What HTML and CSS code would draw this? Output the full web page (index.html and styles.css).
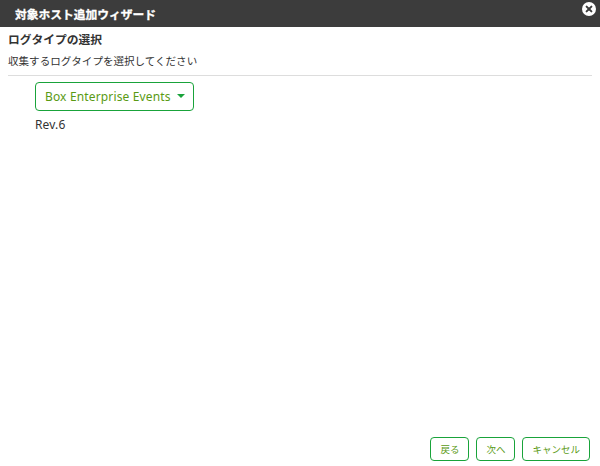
FILE: index.html
```html
<!DOCTYPE html>
<html lang="ja">
<head>
  <meta charset="UTF-8">
  <title>対象ホスト追加ウィザード</title>
  <link rel="stylesheet" href="styles.css">
</head>
<body>
<div class="dialog">
  <div class="titlebar">
    <span class="title">対象ホスト追加ウィザード</span>
    <button class="close-btn" title="閉じる">
      <svg viewBox="0 0 14 14" width="14" height="14">
        <circle cx="7" cy="7" r="7" fill="#fff"/>
        <path d="M4.6 4.6l4.8 4.8M9.4 4.6l-4.8 4.8" stroke="#3c3c3c" stroke-width="2" stroke-linecap="round"/>
      </svg>
    </button>
  </div>
  <div class="content">
    <h2 class="step-title">ログタイプの選択</h2>
    <p class="step-desc">収集するログタイプを選択してください</p>
    <hr class="divider">
    <div class="log-type">
      <button class="btn dropdown">Box Enterprise Events<span class="caret"></span></button>
      <div class="rev">Rev.6</div>
    </div>
  </div>
  <div class="footer">
    <button class="btn small">戻る</button>
    <button class="btn small">次へ</button>
    <button class="btn small">キャンセル</button>
  </div>
</div>
</body>
</html>
```

FILE: styles.css
```css
html, body {
  height: 100%;
}

body {
  margin: 0;
  font-family: "Noto Sans", "Noto Sans CJK JP", sans-serif;
  color: #333;
  background-color: #fff;
}

.dialog {
  height: 466px;
  display: flex;
  flex-direction: column;
  overflow: hidden;
}

.titlebar {
  height: 27px;
  flex: none;
  padding: 0 4px 0 15px;
  display: flex;
  align-items: center;
  justify-content: space-between;
  background-color: #3c3c3c;
}

.title {
  color: #fff;
  font-size: 11.75px;
  font-weight: bold;
  -webkit-text-stroke: 0.3px #fff;
}

.close-btn {
  width: 14px;
  height: 14px;
  padding: 0;
  margin-bottom: 10px;
  border: none;
  background: none;
  display: flex;
}

.content {
  flex: 1;
  padding: 4px 8px 0;
}

.step-title {
  margin: 0;
  font-size: 11.75px;
  line-height: 16px;
  font-weight: bold;
}

.step-desc {
  margin: 6px 0 0;
  font-size: 10.55px;
  line-height: 16px;
}

.divider {
  margin: 6px 0 0;
  border: none;
  border-top: 1px solid #ddd;
}

.log-type {
  padding: 6px 0 0 27px;
}

.btn {
  font-family: inherit;
  color: #5a9a14;
  background-color: #fff;
  border: 1px solid #19a33a;
  border-radius: 4px;
}

.dropdown {
  width: 159px;
  height: 29px;
  padding: 0 0 0 9px;
  display: flex;
  align-items: center;
  font-size: 12px;
  letter-spacing: 0.15px;
  white-space: nowrap;
}

.caret {
  margin-left: 6px;
  margin-bottom: 2px;
  border-top: 4px solid #19a33a;
  border-left: 4px solid transparent;
  border-right: 4px solid transparent;
}

.rev {
  margin-top: 6px;
  font-size: 12px;
  line-height: 16px;
  letter-spacing: 0.15px;
}

.footer {
  flex: none;
  padding: 0 10px 5px 0;
  display: flex;
  justify-content: flex-end;
  gap: 7px;
}

.small {
  height: 24px;
  padding: 0 9px;
  font-size: 9.5px;
}
```
